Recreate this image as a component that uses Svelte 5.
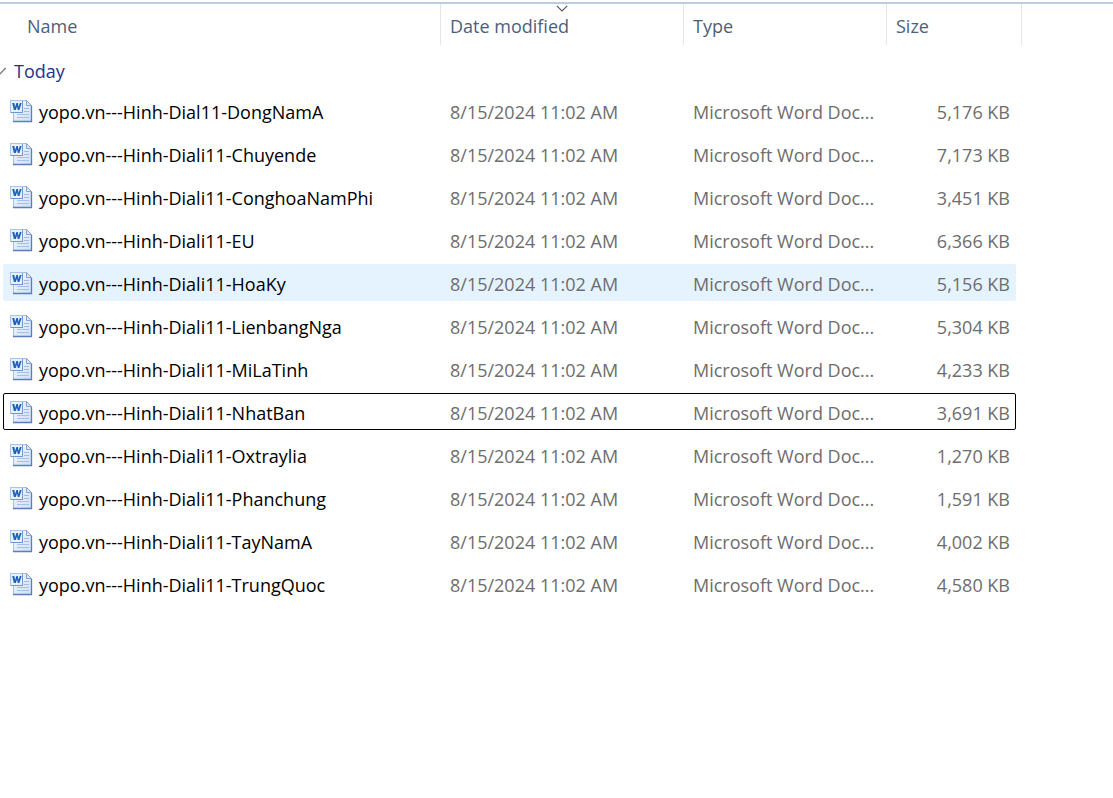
<script lang="ts">
  type FileRow = { name: string; size: string };

  const modified = '8/15/2024 11:02 AM';
  const type = 'Microsoft Word Doc...';

  const files: FileRow[] = [
    { name: 'yopo.vn---Hinh-Dial11-DongNamA', size: '5,176 KB' },
    { name: 'yopo.vn---Hinh-Diali11-Chuyende', size: '7,173 KB' },
    { name: 'yopo.vn---Hinh-Diali11-ConghoaNamPhi', size: '3,451 KB' },
    { name: 'yopo.vn---Hinh-Diali11-EU', size: '6,366 KB' },
    { name: 'yopo.vn---Hinh-Diali11-HoaKy', size: '5,156 KB' },
    { name: 'yopo.vn---Hinh-Diali11-LienbangNga', size: '5,304 KB' },
    { name: 'yopo.vn---Hinh-Diali11-MiLaTinh', size: '4,233 KB' },
    { name: 'yopo.vn---Hinh-Diali11-NhatBan', size: '3,691 KB' },
    { name: 'yopo.vn---Hinh-Diali11-Oxtraylia', size: '1,270 KB' },
    { name: 'yopo.vn---Hinh-Diali11-Phanchung', size: '1,591 KB' },
    { name: 'yopo.vn---Hinh-Diali11-TayNamA', size: '4,002 KB' },
    { name: 'yopo.vn---Hinh-Diali11-TrungQuoc', size: '4,580 KB' }
  ];

  let highlighted = $state(4);
  let focused = $state(7);
  let open = $state(true);
</script>

<!-- shared page shading for the document icons -->
<svg class="defs" width="0" height="0" aria-hidden="true">
  <linearGradient id="page" x1="0" y1="0" x2="1" y2="1">
    <stop offset="0" stop-color="#f4f8fe" />
    <stop offset="1" stop-color="#cfdff5" />
  </linearGradient>
</svg>

<table class="files">
  <thead>
    <tr class="head">
      <th class="name"><button>Name</button></th>
      <th>
        <button>Date modified</button>
        <svg class="sort" width="12" height="7" viewBox="0 0 12 7" aria-hidden="true">
          <path d="M.8.8 6 6 11.2.8" fill="none" stroke="#555" stroke-width="1.1" />
        </svg>
      </th>
      <th><button>Type</button></th>
      <th><button>Size</button></th>
    </tr>
  </thead>
  <tbody>
    <tr class="group">
      <td>
        <button aria-expanded={open} onclick={() => (open = !open)}>
          <svg width="6" height="8" viewBox="0 0 6 8" aria-hidden="true">
            <path d="M0 7 5.6 1" fill="none" stroke="#777" stroke-width="1.2" />
          </svg>
          Today
        </button>
      </td>
    </tr>
    {#if open}
      {#each files as file, i}
        <tr
          class="file"
          class:highlighted={i === highlighted}
          class:focused={i === focused}
          onclick={() => (focused = i)}
        >
          <td class="name">
            <svg width="24" height="24" viewBox="0 0 24 24" aria-hidden="true">
              <path d="M4.5 1.5h13l5 5v16h-18z" fill="url(#page)" stroke="#a9bfe2" />
              <path d="M22.5 7v15.5H4" fill="none" stroke="#5a7dbb" stroke-width="1.3" />
              <path d="M17.5 1.5v5h5z" fill="#dce8f8" stroke="#86a3d3" />
              <path d="M15 9.5h5M15 12.5h5" stroke="#a3b9df" />
              <path d="M8 15.5h12M8 18.5h12" stroke="#a9c0e6" />
              <rect x="1" y="1" width="13" height="13" fill="#6f97d4" />
              <rect x="1" y="1" width="13" height="1" fill="#a9c3ea" />
              <rect x="1" y="1" width="1" height="13" fill="#a9c3ea" />
              <rect x="2" y="2" width="11" height="11" fill="#e6f1fd" />
              <path
                d="M3.2 4h2.1l.8 4L7.4 4h1.5l.7 4 1.2-4h1.8l-2.2 7H8.8L8 7.4 6.8 11H4.9z"
                fill="#1c61bd"
              />
            </svg>
            <span>{file.name}</span>
          </td>
          <td>{modified}</td>
          <td>{type}</td>
          <td class="size">{file.size}</td>
        </tr>
      {/each}
    {/if}
  </tbody>
</table>

<style>
  :global(body) {
    margin: 0;
    background: #fff;
  }

  .defs {
    position: absolute;
  }

  .files {
    display: block;
    margin-top: 2px;
    border-top: 2px solid #bccddc;
    font: 18px/24px 'Open Sans', 'Noto Sans', sans-serif;
    color: #6d6d6d;
  }

  thead,
  tbody {
    display: block;
  }

  .head,
  .file {
    display: grid;
    grid-template-columns: minmax(0, 1fr) 243px 203px 135px;
  }

  .head {
    height: 41px;
    margin-right: 91px;
  }

  th {
    position: relative;
    display: flex;
    align-items: center;
    padding: 2px 0 0 9px;
    border-right: 1px solid #e5e5e5;
    font-weight: normal;
  }

  th.name {
    padding-left: 27px;
  }

  button {
    padding: 0;
    border: 0;
    background: none;
    font: inherit;
    color: #4c607a;
  }

  .sort {
    position: absolute;
    top: 1px;
    left: 50%;
    transform: translateX(-50%);
  }

  .group {
    display: block;
    padding: 14px 0 9px;
  }

  .group td {
    display: block;
    padding: 0;
  }

  .group button {
    display: flex;
    align-items: center;
    gap: 8px;
    color: #1e3287;
  }

  .file {
    grid-template-columns: minmax(0, 1fr) 243px 203px 130px;
    align-items: center;
    height: 37px;
    margin: 0 97px 6px 3px;
    border-radius: 2px;
  }

  .file td {
    padding: 2px 0 0 10px;
    white-space: nowrap;
  }

  .file .name {
    display: flex;
    align-items: flex-start;
    gap: 6px;
    padding-left: 6px;
    color: #000;
  }

  .name svg {
    margin-top: -1px;
  }

  .file .size {
    padding: 2px 6px 0 0;
    text-align: right;
  }

  .highlighted {
    background: #e5f3ff;
  }

  .focused {
    outline: 1px solid #000;
    outline-offset: -1px;
  }
</style>
